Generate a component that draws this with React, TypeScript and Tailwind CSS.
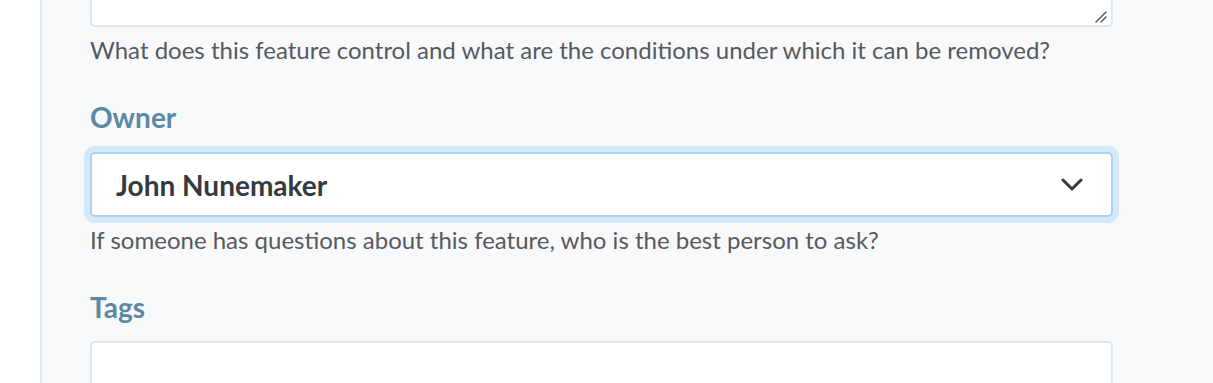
export default function App() {
  const font = { fontFamily: 'Lato, "Noto Sans", sans-serif' };
  return (
    <div className="w-[1213px] h-[383px] overflow-hidden bg-white flex" style={font}>
      <div className="w-[40px] shrink-0 bg-white" />
      <div className="flex-1 border-l-2 border-[#dde7f3] bg-[#f8f9fb] pl-[48px] pr-[100px]">
        <div className="flex flex-col">
          <div className="relative -mt-[73px]">
            <textarea
              className="block w-full h-[100px] bg-white border-2 border-[#dde7f3] rounded-[5px] outline-none resize-none"
              readOnly
            />
            {/* resize grip */}
            <svg className="absolute right-[5px] bottom-[3px]" width="14" height="14" viewBox="0 0 14 14" fill="none">
              <line x1="2" y1="12" x2="12" y2="2" stroke="#5f6368" strokeWidth="1.6" strokeLinecap="round" />
              <line x1="7" y1="12" x2="12" y2="7" stroke="#5f6368" strokeWidth="1.6" strokeLinecap="round" />
            </svg>
          </div>
          <p className="mt-[7px] text-[24px] leading-[32px] text-[#555a5f]">
            What does this feature control and what are the conditions under which it can be removed?
          </p>

          <label className="mt-[33px] text-[28px] leading-[36px] font-bold text-[#5b88a4]">Owner</label>
          <div className="mt-[17px] h-[65px] bg-white border-2 border-[#a6d4f5] rounded-[5px] shadow-[0_0_0_6px_#d5e8f7] flex items-center justify-between pl-[24px] pr-[28px]">
            <span className="text-[28px] leading-[36px] font-bold text-[#343a40]">John Nunemaker</span>
            <svg width="22" height="14" viewBox="0 0 22 14" fill="none">
              <polyline points="2,2 11,11 20,2" stroke="#343a40" strokeWidth="3" strokeLinecap="round" strokeLinejoin="round" />
            </svg>
          </div>
          <p className="mt-[7px] text-[24px] leading-[32px] text-[#555a5f]">
            If someone has questions about this feature, who is the best person to ask?
          </p>

          <label className="mt-[33px] text-[28px] leading-[36px] font-bold text-[#5b88a4]">Tags</label>
          <div className="mt-[16px] h-[64px] bg-white border-2 border-[#dde7f3] rounded-[5px]" />
        </div>
      </div>
    </div>
  );
}
